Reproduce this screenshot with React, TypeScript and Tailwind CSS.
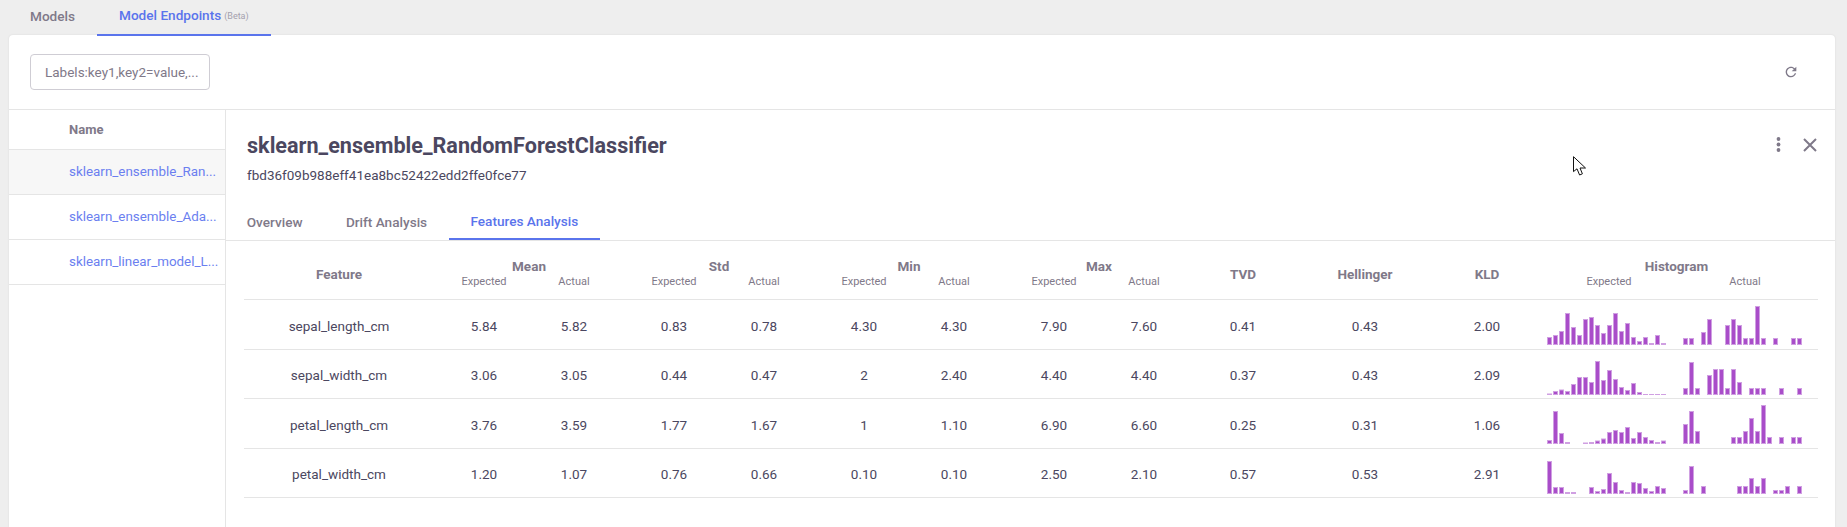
import React from 'react';

const BASE = 44;

// bar heights in px, read off the screenshot
const rows = [
    {
        feature: 'sepal_length_cm',
        values: ['5.84', '5.82', '0.83', '0.78', '4.30', '4.30', '7.90', '7.60'],
        tvd: '0.41', hellinger: '0.43', kld: '2.00',
        expected: [8, 10, 14, 32, 18, 10, 26, 28, 20, 12, 20, 32, 14, 22, 8, 4, 8, 2, 10, 2],
        actual: [7, 7, 0, 13, 26, 0, 0, 20, 26, 20, 7, 7, 39, 7, 0, 7, 0, 0, 7, 7],
    },
    {
        feature: 'sepal_width_cm',
        values: ['3.06', '3.05', '0.44', '0.47', '2', '2.40', '4.40', '4.40'],
        tvd: '0.37', hellinger: '0.43', kld: '2.09',
        expected: [1.5, 4, 5.5, 4, 11, 18, 18, 13, 34, 15, 25, 16, 8, 5, 12, 3, 1, 1, 1, 1],
        actual: [7, 33, 7, 0, 20, 26, 26, 7, 26, 13, 0, 7, 7, 7, 0, 0, 7, 0, 0, 7],
    },
    {
        feature: 'petal_length_cm',
        values: ['3.76', '3.59', '1.77', '1.67', '1', '1.10', '6.90', '6.60'],
        tvd: '0.25', hellinger: '0.31', kld: '1.06',
        expected: [4, 33, 11, 2, 0, 0, 1.5, 2, 3.5, 5.5, 12, 14, 12, 17, 6, 12, 7, 4, 2, 3.5],
        actual: [20, 33, 13, 0, 0, 0, 0, 0, 7, 7, 13, 26, 13, 39, 7, 0, 7, 0, 7, 7],
    },
    {
        feature: 'petal_width_cm',
        values: ['1.20', '1.07', '0.76', '0.66', '0.10', '0.10', '2.50', '2.10'],
        tvd: '0.57', hellinger: '0.53', kld: '2.91',
        expected: [33, 7, 7, 2, 2, 0, 0, 7, 3, 5, 21, 12, 4, 2, 12, 11, 6, 3, 8, 6],
        actual: [4, 28, 0, 8, 0, 0, 0, 0, 0, 8, 8, 16, 8, 16, 0, 4, 4, 8, 0, 8],
    },
];

const gridCols = 'grid grid-cols-[190px_190px_190px_190px_190px_98px_146px_98px_282px]';
const valueCols = 'grid grid-cols-2 px-[5px]';

const Bars: React.FC<{ data: number[] }> = ({ data }) => (
    <svg width={120} height={BASE} className="block">
        {data.map((h, i) =>
            h > 0 ? (
                <rect
                    key={i}
                    x={i * 6 + 0.5}
                    y={BASE - h + 0.5}
                    width={4}
                    height={h - 1 > 0 ? h - 1 : 0.5}
                    fill="#a94dc9"
                    stroke="#d0a0e2"
                    strokeWidth={1}
                />
            ) : null
        )}
    </svg>
);

const GroupHead: React.FC<{ title: string }> = ({ title }) => (
    <div className="flex flex-col items-center justify-center">
        <span className="text-[13.5px] leading-[16px] font-bold text-[#7f7989] mt-[7px]">{title}</span>
        <div className={`${valueCols} w-full text-[11px] leading-[15px] text-[#7f7989] text-center`}>
            <span>Expected</span>
            <span>Actual</span>
        </div>
    </div>
);

export default function App() {
    return (
        <div className="h-[527px] w-[1847px] overflow-hidden bg-[#eeeeee] flex flex-col text-[#4b4760] font-['Roboto',sans-serif]">
            <div className="h-[35px] shrink-0 flex pl-[8px] text-[13.6px] font-medium">
                <div className="h-[36px] px-[22px] flex items-center pb-[3px] text-[#7f7989]">Models</div>
                <div className="h-[36px] px-[22px] flex items-center pb-[3px] text-[#5a74ec] border-b-2 border-[#5a74ec] relative z-10">
                    Model Endpoints
                    <span className="text-[9px] font-normal text-[#a3a0ad] ml-[3px] mt-[3px]">(Beta)</span>
                </div>
            </div>

            <div className="relative ml-[9px] mr-[12px] flex-1 min-h-0 flex flex-col bg-white rounded-t-[4px] shadow-[0_0_2px_rgba(0,0,0,0.1)]">
                <div className="h-[75px] shrink-0 flex items-center justify-between pl-[21px] pr-[36px] border-b border-[#e5e5e5]">
                    <div className="w-[180px] h-[36px] flex items-center px-[14px] border border-[#cfcdd4] rounded-[4px] text-[13.5px] text-[#7f7989] whitespace-nowrap overflow-hidden">
                        Labels:key1,key2=value,...
                    </div>
                    <svg width={16} height={16} viewBox="0 0 24 24" fill="#7f7989">
                        <path d="M17.65 6.35C16.2 4.9 14.21 4 12 4c-4.42 0-7.99 3.58-7.99 8s3.57 8 7.99 8c3.73 0 6.84-2.55 7.73-6h-2.08c-.82 2.33-3.04 4-5.65 4-3.31 0-6-2.69-6-6s2.69-6 6-6c1.66 0 3.14.69 4.22 1.78L13 11h7V4l-2.35 2.35z" />
                    </svg>
                </div>

                <div className="flex flex-1 min-h-0">
                    <div className="w-[217px] shrink-0 border-r border-[#e5e5e5]">
                        <div className="h-[40px] flex items-center pl-[60px] text-[13px] font-bold text-[#7f7989] border-b border-[#e5e5e5]">Name</div>
                        {['sklearn_ensemble_Ran...', 'sklearn_ensemble_Ada...', 'sklearn_linear_model_L...'].map((name, i) => (
                            <div
                                key={name}
                                className={`h-[45px] flex items-center pl-[60px] text-[13.4px] text-[#6b7ff0] whitespace-nowrap border-b border-[#e5e5e5] ${i === 0 ? 'bg-[#f7f7f7]' : ''}`}
                            >
                                {name}
                            </div>
                        ))}
                    </div>

                    <div className="flex-1 min-w-0 flex flex-col">
                        <div className="h-[131px] shrink-0 flex flex-col border-b border-[#e5e5e5]">
                            <div className="flex justify-between pl-[21px] pr-[18px] flex-1">
                                <div className="pt-[22px]">
                                    <h1 className="text-[21.6px] leading-[28px] font-bold text-[#4b4760]">sklearn_ensemble_RandomForestClassifier</h1>
                                    <p className="text-[13.5px] leading-[18px] mt-[6px]">fbd36f09b988eff41ea8bc52422edd2ffe0fce77</p>
                                </div>
                                <div className="flex items-start gap-[22px] pt-[27px]">
                                    <svg width={5} height={15} className="block" fill="#7f7989">
                                        <circle cx={2.5} cy={2} r={1.9} />
                                        <circle cx={2.5} cy={7.5} r={1.9} />
                                        <circle cx={2.5} cy={13} r={1.9} />
                                    </svg>
                                    <svg width={14} height={14} viewBox="0 0 14 14" stroke="#7f7989" strokeWidth={2} className="block mt-[1px]">
                                        <path d="M1 1l12 12M13 1L1 13" />
                                    </svg>
                                </div>
                            </div>
                            <div className="flex -ml-px text-[13.6px] font-medium text-[#7f7989]">
                                <div className="h-[36px] px-[21.7px] flex items-center">Overview</div>
                                <div className="h-[36px] px-[21.7px] flex items-center">Drift Analysis</div>
                                <div className="h-[36px] px-[21.7px] flex items-center text-[#5a74ec] border-b-2 border-[#5a74ec]">Features Analysis</div>
                            </div>
                        </div>

                        <div className="ml-[18px] w-[1574px]">
                            <div className={`${gridCols} h-[59px] border-b border-[#e5e5e5] text-center`}>
                                <div className="flex items-center justify-center pt-[8px] text-[13.5px] font-bold text-[#7f7989]">Feature</div>
                                <GroupHead title="Mean" />
                                <GroupHead title="Std" />
                                <GroupHead title="Min" />
                                <GroupHead title="Max" />
                                <div className="flex items-center justify-center pt-[8px] text-[13.5px] font-bold text-[#7f7989]">TVD</div>
                                <div className="flex items-center justify-center pt-[8px] text-[13.5px] font-bold text-[#7f7989]">Hellinger</div>
                                <div className="flex items-center justify-center pt-[8px] text-[13.5px] font-bold text-[#7f7989]">KLD</div>
                                <div className="flex flex-col items-center justify-center">
                                    <span className="text-[13.5px] leading-[16px] font-bold text-[#7f7989] mt-[7px] -ml-[1px]">Histogram</span>
                                    <div className="flex w-full pl-[9px] text-[11px] leading-[15px] text-[#7f7989] text-center">
                                        <span className="w-[128px]">Expected</span>
                                        <span className="w-[144px]">Actual</span>
                                    </div>
                                </div>
                            </div>

                            {rows.map((row) => (
                                <div key={row.feature} className={`${gridCols} h-[49.5px] border-b border-[#e5e5e5] text-center text-[13.5px] items-center`}>
                                    <div className="pt-[3px]">{row.feature}</div>
                                    {[0, 2, 4, 6].map((n) => (
                                        <div key={n} className={`${valueCols} pt-[3px]`}>
                                            <span>{row.values[n]}</span>
                                            <span>{row.values[n + 1]}</span>
                                        </div>
                                    ))}
                                    <div className="pt-[3px]">{row.tvd}</div>
                                    <div className="pt-[3px]">{row.hellinger}</div>
                                    <div className="pt-[3px]">{row.kld}</div>
                                    <div className="flex gap-[16px] pl-[11px] self-end pb-[3.5px]">
                                        <Bars data={row.expected} />
                                        <Bars data={row.actual} />
                                    </div>
                                </div>
                            ))}
                        </div>
                    </div>
                </div>

                {/* mouse pointer caught in the screenshot */}
                <svg width={14} height={21} viewBox="0 0 14 21" className="absolute left-[1564px] top-[121px]" fill="#fff" stroke="#111" strokeWidth={1}>
                    <path d="M0.5 0.7V15.6L4 12.8L6.6 19L9.4 17.8L7 12H12.5Z" />
                </svg>
            </div>
        </div>
    );
}
